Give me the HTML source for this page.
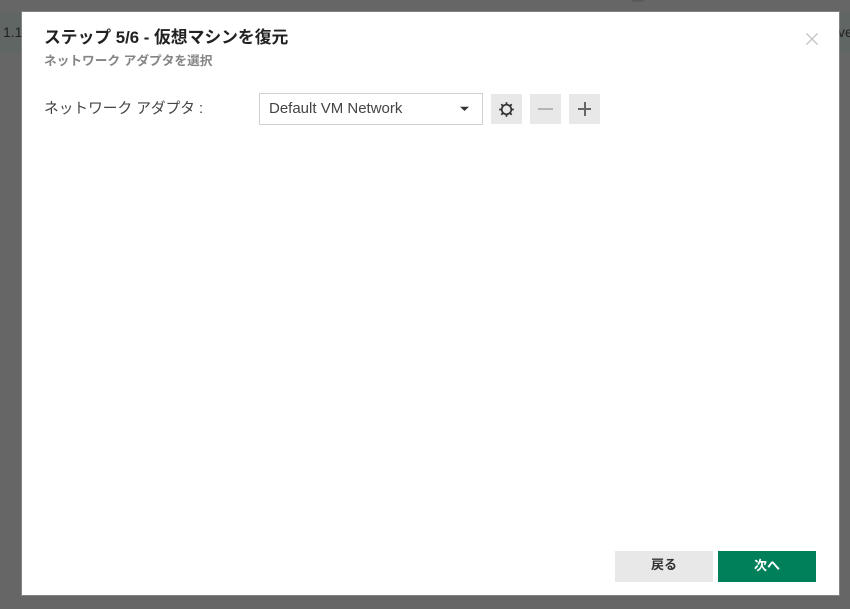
<!DOCTYPE html>
<html lang="ja">
<head>
<meta charset="utf-8">
<style>
html,body{margin:0;padding:0}
body{width:850px;height:609px;position:relative;overflow:hidden;background:#666;font-family:"Liberation Sans","Noto Sans CJK JP",sans-serif}
.a{position:absolute;white-space:nowrap}
.btn{position:absolute;top:94px;width:31px;height:30px;background:#e8e8e8}
</style>
</head>
<body>
<div class="a" style="left:0;top:13px;width:850px;height:40px;background:#5f6664"></div>
<div class="a" style="left:3px;top:23px;font-size:14px;line-height:18px;color:#222">1.1</div>
<div class="a" style="left:838px;top:23px;font-size:14px;line-height:18px;color:#222">ve</div>
<div class="a" style="left:630px;top:-8px;width:16px;height:10px;border-radius:8px;background:#5a5a5a"></div>

<div class="a" style="left:22px;top:12px;width:817px;height:583px;background:#fff;box-shadow:0 0 0 1px rgba(150,150,150,.6)"></div>

<div class="a" style="left:44px;top:27px;font-size:16.8px;line-height:22px;font-weight:700;color:#222">ステップ 5/6 - 仮想マシンを復元</div>
<div class="a" style="left:44px;top:53px;font-size:12.7px;line-height:17px;font-weight:700;color:#858585">ネットワーク アダプタを選択</div>

<svg class="a" style="left:805px;top:32px" width="14" height="14" viewBox="0 0 14 14"><path d="M1.5 1.5L12.5 12.5M12.5 1.5L1.5 12.5" stroke="#c4c4c4" stroke-width="1.3" fill="none"/></svg>

<div class="a" style="left:44px;top:98px;font-size:14.7px;line-height:22px;color:#444">ネットワーク アダプタ :</div>

<div class="a" style="left:259px;top:93px;width:222px;height:30px;border:1px solid #d0d0d0;background:#fff"></div>
<div class="a" style="left:269px;top:99px;font-size:15px;line-height:20px;color:#444">Default VM Network</div>
<svg class="a" style="left:459px;top:106px" width="11" height="6" viewBox="0 0 11 6"><path d="M1 0.8H10L5.5 5Z" fill="#333"/></svg>

<div class="btn" style="left:491px"></div>
<svg class="a" style="left:498px;top:101px" width="17" height="17" viewBox="0 0 17 17"><g fill="none" stroke="#333"><circle cx="8.5" cy="8.5" r="4.8" stroke-width="1.7"/><path d="M8.5 1.2V3.6M8.5 13.4V15.8M1.2 8.5H3.6M13.4 8.5H15.8M3.3 3.3L5 5M12 12L13.7 13.7M13.7 3.3L12 5M5 12L3.3 13.7" stroke-width="1.8"/></g></svg>

<div class="btn" style="left:530px"></div>
<div class="a" style="left:538px;top:108px;width:15px;height:2px;background:#b5b5b5"></div>

<div class="btn" style="left:569px"></div>
<div class="a" style="left:578px;top:108px;width:13px;height:2px;background:#666"></div>
<div class="a" style="left:584px;top:102px;width:2px;height:14px;background:#666"></div>

<div class="a" style="left:615px;top:551px;width:98px;height:31px;background:#e8e8e8;color:#333;font-size:13px;font-weight:700;line-height:28px;text-align:center">戻る</div>
<div class="a" style="left:718px;top:551px;width:98px;height:31px;background:#00805a;color:#fff;font-size:13px;font-weight:700;line-height:29px;text-align:center">次へ</div>
</body>
</html>
